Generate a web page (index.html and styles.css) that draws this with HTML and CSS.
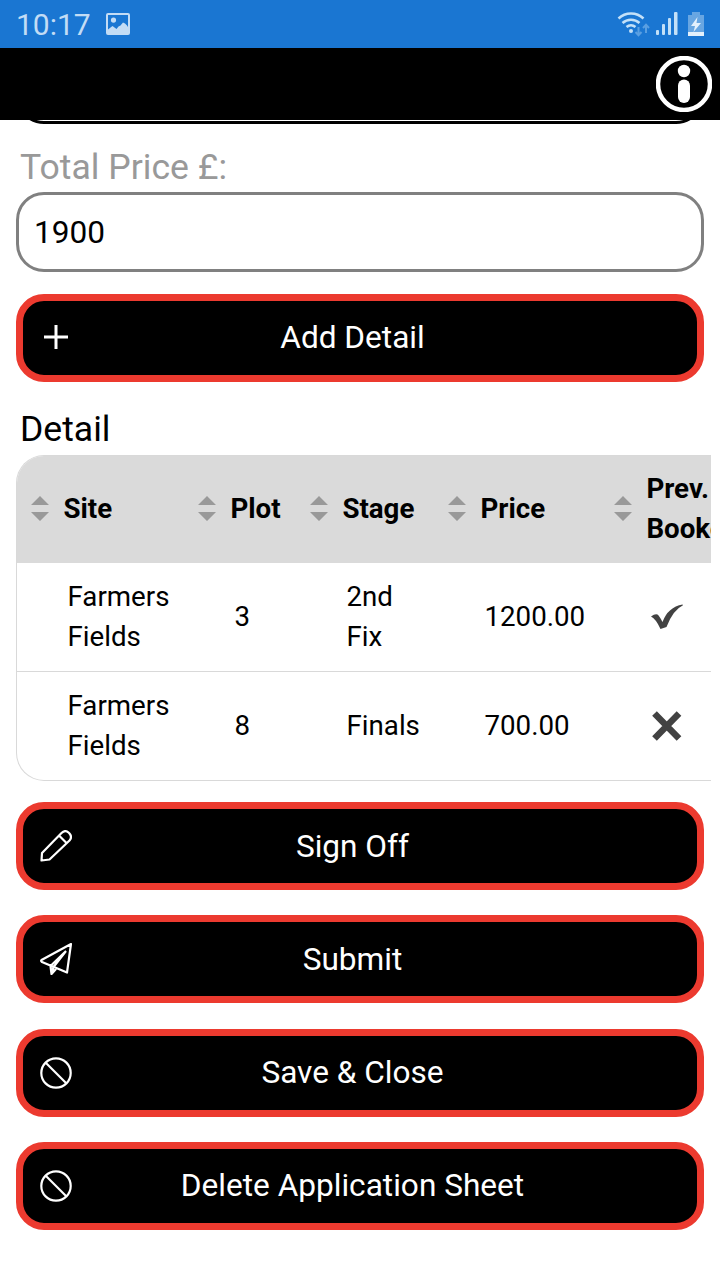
FILE: index.html
```
<!DOCTYPE html>
<html lang="en">
<head>
    <meta charset="UTF-8">
    <meta name="viewport" content="width=device-width, initial-scale=1.0">
    <title>Application Sheet</title>
    <link rel="stylesheet" href="styles.css">
</head>
<body>

    <!-- Status bar -->
    <div class="status-bar">
        <span class="time">10:17</span>
        <svg class="picture-icon" width="24" height="22" viewBox="0 0 24 22">
            <path fill-rule="evenodd" fill="#c3dcf5" d="M2 0h20a2 2 0 0 1 2 2v18a2 2 0 0 1-2 2H2a2 2 0 0 1-2-2V2a2 2 0 0 1 2-2zM2 2v14.500l2.500-2 2-1.500 2 1.500 2 1.500 2-2.500 2-1 2.500-3 2 1 2 2 1 1.500V2zM7.500 4.500a2.600 2.600 0 1 1 0 5.200 2.600 2.600 0 0 1 0-5.200z"/>
        </svg>
        <div class="status-icons">
            <svg width="34" height="26" viewBox="0 0 34 26" fill="none">
                <path d="M1.500 7.500a18 18 0 0 1 25 0M5.500 12a12.500 12.500 0 0 1 17 0M9.500 16a7 7 0 0 1 9 0" stroke="#c3e0f8" stroke-width="2.500"/>
                <circle cx="14" cy="20" r="2" fill="#c3e0f8"/>
                <path d="M21.500 16v8M18.500 21l3 3.200 3-3.200M29 22v-8M26 17l3-3.200 3 3.200" stroke="#5a9fe2" stroke-width="2"/>
            </svg>
            <svg width="22" height="24" viewBox="0 0 22 24" fill="#c3e0f8">
                <rect x="0" y="18" width="3" height="5" rx="1"/>
                <rect x="6" y="12" width="3" height="11" rx="1"/>
                <rect x="12" y="6" width="3" height="17" rx="1"/>
                <rect x="18" y="0" width="3.500" height="23" rx="1"/>
            </svg>
            <svg width="16" height="24" viewBox="0 0 16 24">
                <path d="M4 0h8v3h4v17H0V3h4z" fill="#68a6e2"/>
                <path d="M0 20h16v4H0z" fill="#e3f0fc"/>
                <path d="M9.500 5L3 14h4l-1.500 6L13 11H8.500z" fill="#e3f0fc"/>
            </svg>
        </div>
    </div>

    <!-- App header -->
    <div class="header">
        <svg width="56" height="56" viewBox="0 0 56 56">
            <circle cx="28" cy="28" r="26" fill="none" stroke="#fff" stroke-width="4.500"/>
            <circle cx="28" cy="15" r="6.200" fill="#fff"/>
            <rect x="22" y="23.500" width="12" height="23.500" rx="6" fill="#fff"/>
        </svg>
    </div>

    <div class="content">
        <div class="previous-field">
            <div class="field"></div>
        </div>

        <label for="total-price">Total Price £:</label>
        <input type="text" id="total-price" class="field" value="1900">

        <button class="button add-button">
            <svg width="32" height="32" viewBox="0 0 32 32"><path d="M16 4v24M4 16h24" stroke-width="3"/></svg>
            <span>Add Detail</span>
        </button>

        <h2>Detail</h2>
        <div class="table-wrapper">
            <table>
                <colgroup>
                    <col class="col-site">
                    <col class="col-plot">
                    <col class="col-stage">
                    <col class="col-price">
                    <col class="col-prev">
                </colgroup>
                <thead>
                    <tr>
                        <th><div class="sort">Site</div></th>
                        <th><div class="sort">Plot</div></th>
                        <th><div class="sort">Stage</div></th>
                        <th><div class="sort">Price</div></th>
                        <th><div class="sort">Prev. Booked</div></th>
                    </tr>
                </thead>
                <tbody>
                    <tr>
                        <td>Farmers Fields</td>
                        <td>3</td>
                        <td>2nd<br>Fix</td>
                        <td>1200.00</td>
                        <td>
                            <svg width="32" height="26" viewBox="0 0 32 26">
                                <path d="M0 12.500Q4 9.500 6.500 10.500Q8.500 12 11.500 18Q17 3 31.500 0.500L32 1.300Q22 6 15.500 23Q12.500 24 9.500 25Q5 15 0 12.500z" fill="#424242"/>
                            </svg>
                        </td>
                    </tr>
                    <tr>
                        <td>Farmers Fields</td>
                        <td>8</td>
                        <td>Finals</td>
                        <td>700.00</td>
                        <td>
                            <svg width="32" height="30" viewBox="0 0 32 30">
                                <path d="M3.500 2.500L28 27.500M28 2.500L3.500 27.500" stroke="#424242" stroke-width="6.500"/>
                            </svg>
                        </td>
                    </tr>
                </tbody>
            </table>
        </div>

        <div class="actions">
            <button class="button">
                <svg width="32" height="32" viewBox="0 0 32 32"><path d="M1.500 30.500L2 23L21.500 3Q25 -0.500 28.500 2.500L29.500 3.500Q32.500 7 29.500 10.500L9.500 29.500zM19 5.500L26.500 13"/></svg>
                <span>Sign Off</span>
            </button>
            <button class="button">
                <svg width="32" height="32" viewBox="0 0 32 32"><path d="M31 1L1.500 17Q0.500 18 2 19L27 29.500zM26 8L10.500 23L11.500 31L16 26M26 8L13.500 24L12 30"/></svg>
                <span>Submit</span>
            </button>
            <button class="button">
                <svg width="32" height="32" viewBox="0 0 32 32"><circle cx="16" cy="16" r="14.700"/><path d="M5.500 5.500L26.500 26.500"/></svg>
                <span>Save &amp; Close</span>
            </button>
            <button class="button">
                <svg width="32" height="32" viewBox="0 0 32 32"><circle cx="16" cy="16" r="14.700"/><path d="M5.500 5.500L26.500 26.500"/></svg>
                <span>Delete Application Sheet</span>
            </button>
        </div>
    </div>

</body>
</html>
```
FILE: styles.css
```
* {
    box-sizing: border-box;
}
body {
    font-family: Roboto, sans-serif;
    background-color: #fff;
    color: #000;
    margin: 0;
    height: 1280px;
    overflow: hidden;
}
.status-bar {
    display: flex;
    align-items: center;
    height: 48px;
    padding: 0 16px;
    background-color: #1a76d2;
}
.time {
    color: #c3dcf5;
    font-size: 30px;
    line-height: 48px;
    padding-top: 2px;
}
.picture-icon {
    margin-left: 15px;
}
.status-icons {
    display: flex;
    align-items: center;
    margin-left: auto;
}
.status-icons svg + svg {
    margin-left: 5px;
}
.status-icons svg:last-child {
    margin-left: 10px;
}
.header {
    display: flex;
    justify-content: flex-end;
    align-items: center;
    height: 72px;
    padding-right: 8px;
    background-color: #000;
}
.content {
    padding: 0 16px;
}
/* bottom edge of the field scrolled under the header */
.previous-field {
    display: flex;
    align-items: flex-end;
    height: 4px;
    overflow: hidden;
}
.previous-field .field {
    flex-shrink: 0;
    border-color: #000;
}
label {
    display: block;
    height: 68px;
    padding: 22px 4px 0;
    color: #999;
    font-size: 35.6px;
    line-height: 42px;
}
.field {
    display: block;
    width: 100%;
    height: 80px;
    padding: 0 15px;
    border: 3px solid #808080;
    border-radius: 28px;
    background-color: #fff;
    color: #000;
    font-family: inherit;
    font-size: 31.6px;
}
.button {
    display: flex;
    align-items: center;
    width: 100%;
    height: 88px;
    padding: 0 64px 0 17px;
    border: 7px solid #ec3a2f;
    border-radius: 28px;
    background-color: #000;
    color: #fff;
    font-family: inherit;
    font-size: 31.6px;
}
.button span {
    flex: 1;
    text-align: center;
}
.button svg {
    fill: none;
    stroke: #fff;
    stroke-width: 2.2;
    stroke-linejoin: round;
}
.add-button {
    margin-top: 22px;
    padding-bottom: 2px;
}
h2 {
    height: 73px;
    margin: 0;
    padding: 26px 4px 0;
    font-size: 35.6px;
    font-weight: normal;
    line-height: 42px;
}
.table-wrapper {
    height: 326px;
    margin-right: -7px;
    border: 1px solid #d9d9d9;
    border-right: none;
    border-radius: 28px 0 0 28px;
    overflow: hidden;
}
table {
    width: 733px;
    table-layout: fixed;
    border-collapse: separate;
    border-spacing: 0;
    font-size: 27.7px;
    line-height: 40px;
}
.col-site {
    width: 167px;
}
.col-plot {
    width: 112px;
}
.col-stage {
    width: 138px;
}
.col-price {
    width: 166px;
}
.col-prev {
    width: 150px;
}
th {
    height: 107px;
    padding: 0 0 2px 14px;
    background-color: #dadada;
    text-align: left;
}
.sort {
    display: flex;
    align-items: center;
}
.sort::before {
    content: "";
    flex-shrink: 0;
    width: 18px;
    height: 25px;
    margin-right: 14.4px;
    background-color: #999;
    clip-path: polygon(0 9px, 9px 0, 18px 9px, 0 9px, 0 16px, 18px 16px, 9px 25px, 0 16px);
}
td {
    height: 109px;
    padding: 0 20px 0 50.5px;
}
td svg {
    display: block;
}
tbody tr:first-child td {
    border-bottom: 1px solid #d9d9d9;
}
tbody tr:last-child td {
    padding-bottom: 2px;
}
.actions {
    display: flex;
    flex-direction: column;
    gap: 25.3px;
    margin-top: 21px;
}
```
